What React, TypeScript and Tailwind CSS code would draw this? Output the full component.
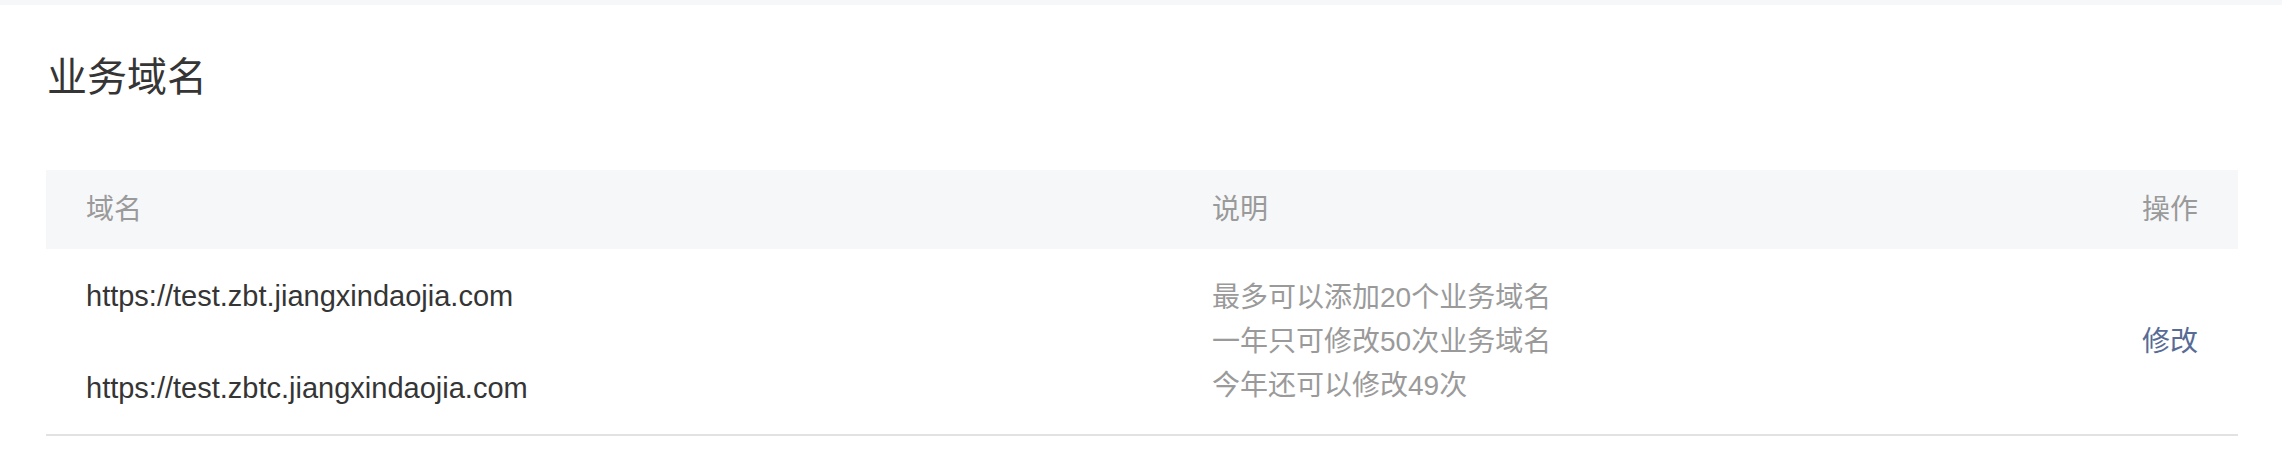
import React from "react";

const domains = [
  "https://test.zbt.jiangxindaojia.com",
  "https://test.zbtc.jiangxindaojia.com",
];

const notes = [
  "最多可以添加20个业务域名",
  "一年只可修改50次业务域名",
  "今年还可以修改49次",
];

export default function App() {
  return (
    <div
      className="min-h-screen bg-white"
      style={{ fontFamily: '"Liberation Sans", "Noto Sans CJK SC", sans-serif' }}
    >
      <div className="h-[5px] bg-[#f6f7f9]" />
      <div className="pl-[46px] pr-[44px]">
        <h2 className="mt-[52px] text-[40px] leading-[40px] text-[#353535] pl-[1px]">业务域名</h2>

        <div className="mt-[73px]">
          <div className="grid grid-cols-[1126px_1fr_auto] h-[79px] items-center bg-[#f6f7f9] text-[28px] text-[#9a9a9a]">
            <div className="px-[40px]">域名</div>
            <div className="px-[40px]">说明</div>
            <div className="px-[40px] text-right">操作</div>
          </div>

          <div className="grid grid-cols-[1126px_1fr_auto] h-[187px] items-center border-b-2 border-[#e2e2e2]">
            <div className="px-[40px] flex flex-col gap-[50px] text-[29px] leading-[42px] text-[#353535]">
              {domains.map((d) => (
                <div key={d}>{d}</div>
              ))}
            </div>
            <div className="px-[40px] text-[28px] leading-[44px] text-[#9a9a9a]">
              {notes.map((n) => (
                <div key={n}>{n}</div>
              ))}
            </div>
            <div className="px-[40px] text-right">
              <a className="text-[28px] text-[#576b95] cursor-pointer">修改</a>
            </div>
          </div>
        </div>
      </div>
    </div>
  );
}
